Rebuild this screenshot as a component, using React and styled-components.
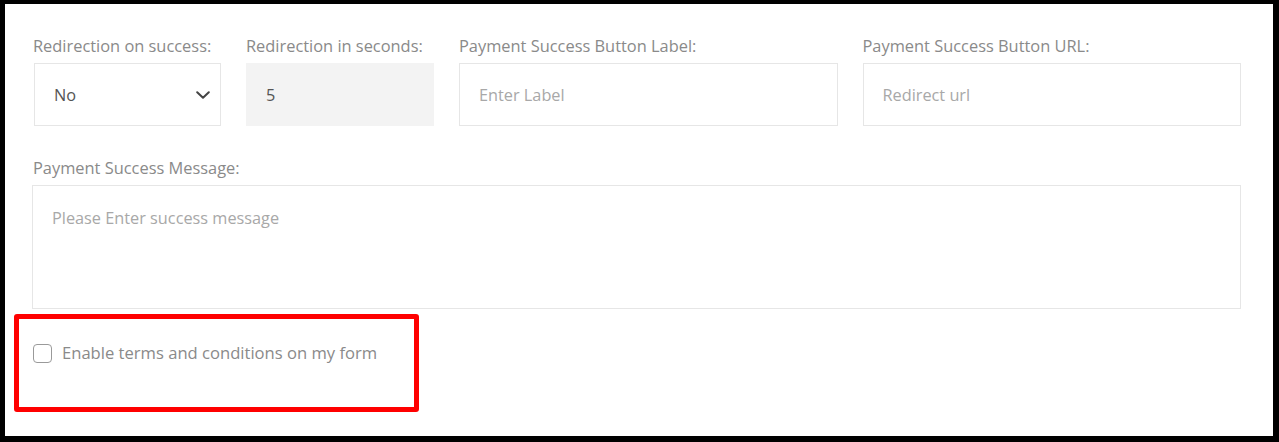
import React from 'react';
import styled, { createGlobalStyle } from 'styled-components';

const GlobalStyle = createGlobalStyle`
  html, body {
    margin: 0;
    padding: 0;
    background: #000;
  }
  * {
    box-sizing: border-box;
  }
`;

const Panel = styled.div`
  margin: 4px 6px 6px 5px;
  height: 432px;
  background: #ffffff;
  padding: 32px 32px 0 27px;
  font-family: "Open Sans", "Noto Sans", sans-serif;
`;

const FieldRow = styled.div`
  display: grid;
  grid-template-columns: 187px 188px 1fr 1fr;
  gap: 25px;
  padding-left: 2px;
`;

const Field = styled.div`
  display: flex;
  flex-direction: column;
  margin-top: ${props => props.top || 0}px;
`;

const Label = styled.label`
  font-size: 16.4px;
  line-height: 20px;
  color: #8a8a8a;
  margin-bottom: 7px;
  margin-left: ${props => props.shift || 0}px;
  white-space: nowrap;
`;

const BaseInput = styled.input`
  height: 63px;
  width: 100%;
  border: 1px solid #e6e6e6;
  background: ${props => (props.disabled ? '#f3f3f3' : '#fff')};
  border-color: ${props => (props.disabled ? '#f3f3f3' : '#e6e6e6')};
  padding: 0 19px;
  font-family: inherit;
  font-size: 16.3px;
  color: #555;
  outline: none;

  &::placeholder {
    color: #a8a8a8;
  }
`;

const SelectBox = styled.div`
  height: 63px;
  border: 1px solid #e6e6e6;
  display: flex;
  align-items: center;
  justify-content: space-between;
  padding: 0 10px 0 19px;
  font-size: 16.3px;
  color: #555;
`;

const TextArea = styled.textarea`
  height: 124px;
  width: 100%;
  border: 1px solid #e6e6e6;
  padding: 21px 19px;
  font-family: inherit;
  font-size: 16.3px;
  line-height: 22px;
  color: #555;
  resize: none;
  outline: none;

  &::placeholder {
    color: #a8a8a8;
  }
`;

const CheckSection = styled.div`
  position: relative;
  padding-top: 34px;
  padding-left: 1px;
`;

const CheckLabel = styled.label`
  display: flex;
  align-items: center;
  gap: 10px;
  font-size: 16.6px;
  line-height: 20px;
  color: #8a8a8a;
`;

const Box = styled.span`
  width: 19px;
  height: 19px;
  border: 1.5px solid #9a9a9a;
  border-radius: 4px;
  background: #fff;
  flex-shrink: 0;
`;

const Highlight = styled.div`
  position: absolute;
  top: 5px;
  left: -18px;
  width: 405px;
  height: 98px;
  border: 5px solid #ff0000;
  border-radius: 3px;
  pointer-events: none;
`;

const Chevron = () => (
  <svg width="14" height="8" viewBox="0 0 14 8" fill="none">
    <polyline points="1.2,1.2 7,6.8 12.8,1.2" stroke="#444" strokeWidth="2" strokeLinecap="round" strokeLinejoin="round" />
  </svg>
);

export default function App() {
  return (
    <>
      <GlobalStyle />
      <Panel>
        <FieldRow>
          <Field>
            <Label shift={-1}>Redirection on success:</Label>
            <SelectBox>
              <span>No</span>
              <Chevron />
            </SelectBox>
          </Field>
          <Field>
            <Label>Redirection in seconds:</Label>
            <BaseInput disabled defaultValue="5" />
          </Field>
          <Field>
            <Label>Payment Success Button Label:</Label>
            <BaseInput placeholder="Enter Label" />
          </Field>
          <Field>
            <Label>Payment Success Button URL:</Label>
            <BaseInput placeholder="Redirect url" />
          </Field>
        </FieldRow>
        <Field top={32}>
          <Label shift={1}>Payment Success Message:</Label>
          <TextArea placeholder="Please Enter success message" />
        </Field>
        <CheckSection>
          <CheckLabel>
            <Box />
            Enable terms and conditions on my form
          </CheckLabel>
          <Highlight />
        </CheckSection>
      </Panel>
    </>
  );
}
